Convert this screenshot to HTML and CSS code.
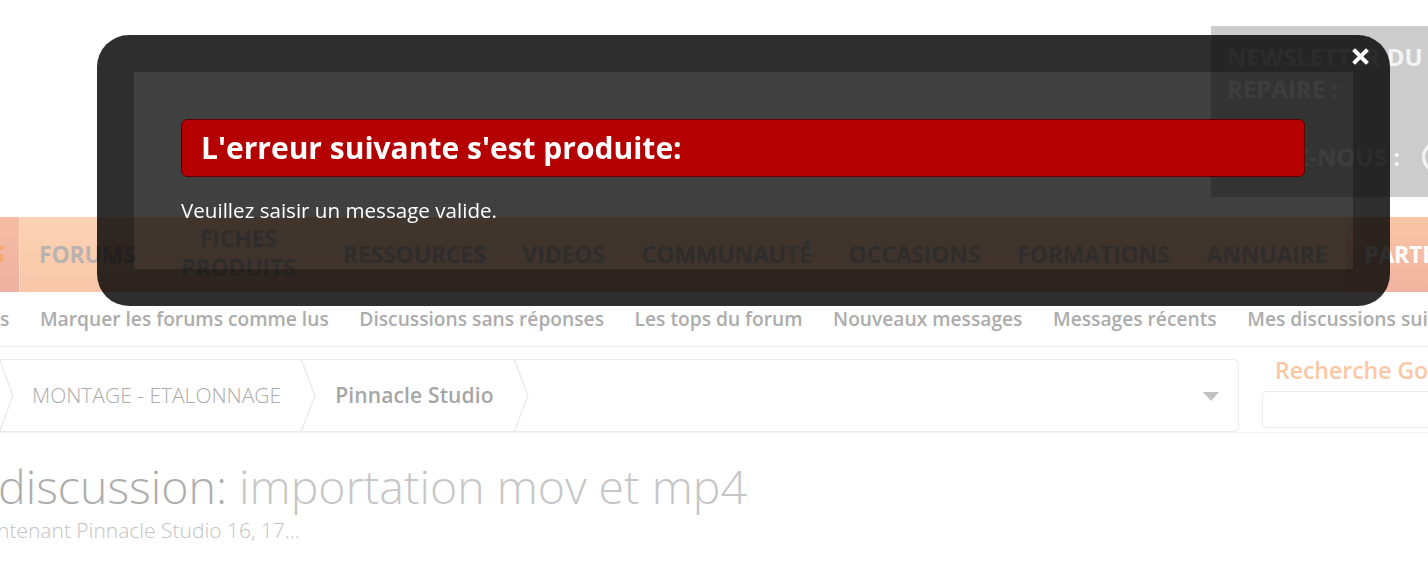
FILE: index.html
```html
<!DOCTYPE html>
<html lang="fr">
<head>
<meta charset="utf-8">
<title>Erreur</title>
<link rel="stylesheet" href="styles.css">
</head>
<body>
<div class="page">
  <header class="top">
    <div class="newsletter">
      <div class="nl-title">NEWSLETTER DU REPAIRE :</div>
      <div class="nl-follow"><span>SUIVEZ-NOUS :</span><span class="ring"></span></div>
    </div>
  </header>
  <nav class="mainnav">
    <a class="tab tab-first">S</a>
    <a class="tab tab-forums">FORUMS</a>
    <a class="tab tab-two">FICHES<br>PRODUITS</a>
    <a class="tab">RESSOURCES</a>
    <a class="tab">VIDEOS</a>
    <a class="tab">COMMUNAUTÉ</a>
    <a class="tab">OCCASIONS</a>
    <a class="tab">FORMATIONS</a>
    <a class="tab">ANNUAIRE</a>
    <a class="tab tab-last">PARTENAIRES</a>
  </nav>
  <div class="subnav">
    <a class="sub sub-first">s</a>
    <a class="sub">Marquer les forums comme lus</a>
    <a class="sub">Discussions sans réponses</a>
    <a class="sub">Les tops du forum</a>
    <a class="sub">Nouveaux messages</a>
    <a class="sub">Messages récents</a>
    <a class="sub">Mes discussions suivies</a>
  </div>
  <div class="crumbrow">
    <div class="crumbs">
      <span class="sep"><svg width="16" height="73" viewBox="0 0 16 73"><polyline points="0.5,0 14,36.5 0.5,73" fill="none" stroke="#e8e8e8" stroke-width="1.2"/></svg></span>
      <a class="crumb">MONTAGE - ETALONNAGE</a>
      <span class="sep"><svg width="16" height="73" viewBox="0 0 16 73"><polyline points="1,0 15,36.5 1,73" fill="none" stroke="#e8e8e8" stroke-width="1.2"/></svg></span>
      <a class="crumb crumb-cur">Pinnacle Studio</a>
      <span class="sep"><svg width="16" height="73" viewBox="0 0 16 73"><polyline points="1,0 15,36.5 1,73" fill="none" stroke="#e8e8e8" stroke-width="1.2"/></svg></span>
      <span class="grow"></span>
      <span class="caret"></span>
    </div>
    <div class="search">
      <div class="search-title">Recherche Google</div>
      <div class="search-input"></div>
    </div>
  </div>
  <div class="titlebar">
    <h1 class="title"><span class="t-pre">discussion:</span> importation mov et mp4</h1>
    <p class="desc">ntenant Pinnacle Studio 16, 17...</p>
  </div>
</div>

<div class="overlay">
  <a class="close"><svg width="17" height="17" viewBox="0 0 17 17"><path d="M3 3 L14 14 M14 3 L3 14" stroke="#fff" stroke-width="4" stroke-linecap="square"/></svg></a>
  <div class="errhead">L'erreur suivante s'est produite:</div>
  <p class="errmsg">Veuillez saisir un message valide.</p>
</div>
</body>
</html>
```

FILE: styles.css
```css
html, body {
  margin: 0;
  padding: 0;
  background: #fff;
}
body {
  width: 1428px;
  height: 581px;
  overflow: hidden;
  font-family: "Open Sans", "Noto Sans", sans-serif;
}
a { text-decoration: none; }

.page {
  width: 1428px;
}

/* header */
.top {
  height: 217px;
  display: flex;
  justify-content: flex-end;
  overflow: hidden;
}
.newsletter {
  margin-top: 26px;
  margin-right: -30px;
  height: 171px;
  width: 247px;
  flex-shrink: 0;
  box-sizing: border-box;
  padding: 15px 0 0 16px;
  background: #cccccc;
  color: #f4f4f4;
  font-weight: 700;
  font-size: 24px;
  line-height: 32px;
  white-space: nowrap;
  display: flex;
  flex-direction: column;
}
.nl-title {
  white-space: normal;
  width: 205px;
}
.nl-follow {
  margin-top: 36px;
  display: flex;
  align-items: center;
  gap: 22px;
}
.ring {
  width: 26px;
  height: 26px;
  border: 3px solid #f4f4f4;
  border-radius: 50%;
  flex-shrink: 0;
}

/* main nav */
.mainnav {
  height: 75px;
  display: flex;
  align-items: center;
  background: linear-gradient(#fdd3b5, #f8c6a8);
  white-space: nowrap;
  overflow: hidden;
}
.tab {
  height: 100%;
  box-sizing: border-box;
  display: flex;
  align-items: center;
  padding: 0 18.5px 2px;
  font-size: 23px;
  font-weight: 700;
  color: #bab2ae;
  letter-spacing: -0.2px;
}
.tab-first {
  width: 20px;
  padding: 0 14px 2px 0;
  justify-content: flex-end;
  background: linear-gradient(#f6bda3, #eeb0a0);
  color: #f7a870;
  border-right: 1px solid #fde0cc;
}
.tab-forums {
  padding-left: 19px;
  padding-right: 27px;
}
.tab-two {
  text-align: center;
  line-height: 29px;
  padding-bottom: 4px;
  padding-right: 29px;
}
.tab-last {
  background: linear-gradient(#f9c6a6, #f0b39f);
  color: #fff;
}

/* sub nav */
.subnav {
  margin-top: 8px;
  height: 40px;
  display: flex;
  align-items: center;
  white-space: nowrap;
  border-bottom: 1px solid #f2f2f2;
  padding-bottom: 6px;
}
.sub {
  padding: 0 15.3px;
  font-size: 19.2px;
  font-weight: 600;
  color: #acacac;
  line-height: 26px;
  margin-top: -2px;
}
.sub-first {
  padding-left: 0;
}

/* breadcrumb row */
.crumbrow {
  display: flex;
  align-items: flex-start;
  padding-top: 12px;
  height: 86px;
  box-sizing: border-box;
  border-bottom: 1px solid #f2f2f2;
}
.crumbs {
  width: 1240px;
  margin-left: -1px;
  height: 73px;
  box-sizing: border-box;
  border: 1px solid #ececec;
  border-left: 0;
  border-radius: 0 6px 6px 0;
  display: flex;
  align-items: center;
  overflow: hidden;
  flex-shrink: 0;
}
.sep {
  display: flex;
  height: 73px;
  align-items: center;
}
.sep svg { display: block; }
.crumb {
  padding: 0 19px 2px 17px;
  font-size: 21px;
  font-weight: 300;
  color: #acacac;
  white-space: nowrap;
}
.crumb-cur {
  font-weight: 600;
  color: #a6a6a6;
  padding: 0 19px 2px 19px;
  letter-spacing: 0.15px;
}
.grow { flex: 1; }
.caret {
  width: 0;
  height: 0;
  border-left: 8px solid transparent;
  border-right: 8px solid transparent;
  border-top: 9px solid #c2c2c2;
  margin-right: 19px;
  margin-top: 2px;
}
.search {
  margin-left: 23px;
  flex-shrink: 0;
}
.search-title {
  margin-top: -3px;
  padding-left: 13px;
  font-size: 23px;
  font-weight: 600;
  color: #fcc8a4;
  white-space: nowrap;
  line-height: 28px;
}
.search-input {
  margin-top: 7px;
  width: 200px;
  height: 37px;
  box-sizing: border-box;
  border: 1px solid #ececec;
  border-radius: 4px;
}

/* title */
.titlebar {
  padding-top: 24px;
  margin-left: -2px;
}
.title {
  margin: 0;
  font-size: 46.5px;
  font-weight: 300;
  line-height: 58px;
  color: #c6c6c6;
  white-space: nowrap;
}
.t-pre { color: #adadad; }
.desc {
  margin: 0 0 0 -1px;
  font-size: 21px;
  font-weight: 300;
  color: #c3c3c3;
  line-height: 30px;
  white-space: nowrap;
}

/* overlay */
.overlay {
  position: fixed;
  left: 97px;
  top: 35px;
  width: 1293px;
  height: 271px;
  box-sizing: border-box;
  border: 37px solid rgba(0, 0, 0, 0.82);
  border-radius: 32px;
  background: rgba(0, 0, 0, 0.75);
  background-clip: padding-box;
  padding: 47px 48px 0 47px;
}
.close {
  position: absolute;
  right: -16px;
  top: -24px;
  display: block;
  width: 17px;
  height: 17px;
}
.close svg { display: block; }
.errhead {
  height: 58px;
  box-sizing: border-box;
  border: 1px solid #5e0000;
  border-radius: 6px;
  background: #b40000;
  color: #fff;
  font-size: 30px;
  font-weight: 700;
  line-height: 56px;
  padding-left: 19px;
}
.errmsg {
  margin: 18px 0 0;
  color: #fff;
  font-size: 20.6px;
  line-height: 30px;
}
```
